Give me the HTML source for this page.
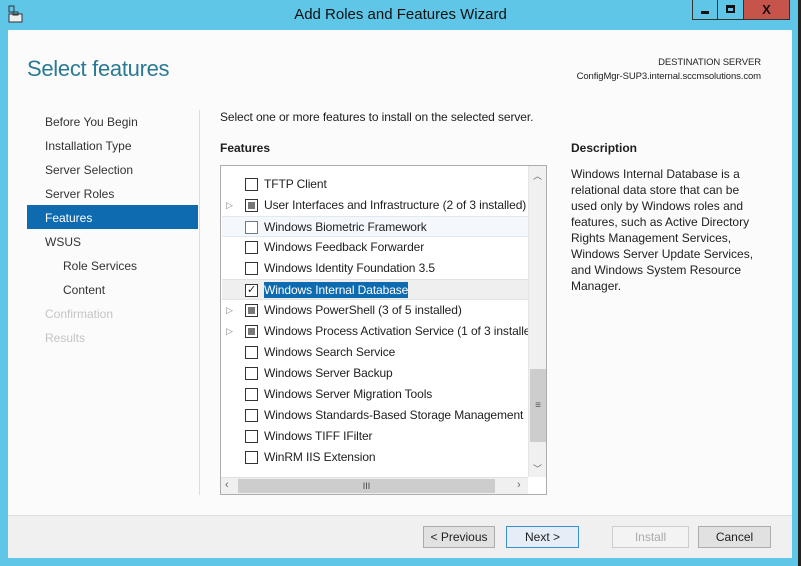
<!DOCTYPE html>
<html><head><style>
*{margin:0;padding:0;box-sizing:border-box}
body{width:801px;height:566px;background:#5fc6e8;font-family:"Liberation Sans",sans-serif;position:relative;overflow:hidden;color:#1e1e1e}
.abs{position:absolute}
.title{left:0;top:0;width:801px;height:30px;text-align:center;font-size:15px;line-height:30px;color:#111}
.win{left:8px;top:30px;width:784px;height:528px;background:#fbfbfb}
.foot{left:8px;top:515px;width:784px;height:43px;background:#f0f0f0;border-top:1px solid #dcdcdc}
.nav{left:45px;font-size:12px;color:#333}
.btn{top:526px;height:22px;border:1px solid #adadad;background:#e1e1e1;font-size:12px;text-align:center;line-height:20px}
.row{position:absolute;left:1px;width:307px;height:21px;font-size:12px;line-height:21px;letter-spacing:-0.1px}
.cb{position:absolute;left:23px;top:4px;width:13px;height:13px;border:1px solid #333;background:#fff}
.cb.p::after{content:"";position:absolute;left:2px;top:2px;width:7px;height:7px;background:#777}
.row span{position:absolute;left:42px;white-space:nowrap}
.ar{position:absolute;left:4px;top:0;font-size:9px;color:#888}
</style></head><body>
<div class="abs title">Add Roles and Features Wizard</div>
<svg class="abs" style="left:8px;top:5px" width="16" height="18"><rect x="1" y="1" width="5" height="6" fill="none" stroke="#333"/><rect x="1" y="9" width="13" height="8" fill="#eee" stroke="#333"/><rect x="5" y="7" width="5" height="3" fill="none" stroke="#333"/></svg>
<div class="abs" style="left:692px;top:0;width:26px;height:20px;background:#5fc6e8;border:1px solid #333;border-top:none"><div style="position:absolute;left:8px;top:11px;width:8px;height:3px;background:#111"></div></div>
<div class="abs" style="left:718px;top:0;width:26px;height:20px;border:1px solid #333;border-top:none;border-left:none"><div style="position:absolute;left:8px;top:5px;width:9px;height:8px;border:2px solid #111;border-top-width:3px"></div></div>
<div class="abs" style="left:744px;top:0;width:46px;height:20px;background:#c7544b;border:1px solid #333;border-top:none;border-left:none;text-align:center;font-weight:bold;font-size:13px;line-height:20px;color:#111">X</div>
<div class="abs" style="left:798px;top:0;width:3px;height:566px;background:#222"></div>
<div class="abs win"></div>
<div class="abs" style="left:27px;top:56px;font-size:22px;color:#2b7a95;letter-spacing:-0.3px">Select features</div>
<div class="abs" style="right:40px;top:56px;font-size:9.5px;text-align:right;line-height:14px;color:#222;letter-spacing:-0.1px">DESTINATION SERVER<br>ConfigMgr-SUP3.internal.sccmsolutions.com</div>
<div class="abs" style="left:27px;top:205px;width:171px;height:24px;background:#0e6bb0"></div>
<div class="abs nav" style="top:115px">Before You Begin</div>
<div class="abs nav" style="top:139px">Installation Type</div>
<div class="abs nav" style="top:163px">Server Selection</div>
<div class="abs nav" style="top:187px">Server Roles</div>
<div class="abs nav" style="top:211px;color:#fff">Features</div>
<div class="abs nav" style="top:235px">WSUS</div>
<div class="abs nav" style="top:259px;left:63px">Role Services</div>
<div class="abs nav" style="top:283px;left:63px">Content</div>
<div class="abs nav" style="top:307px;color:#c4c4c4">Confirmation</div>
<div class="abs nav" style="top:331px;color:#c4c4c4">Results</div>
<div class="abs" style="left:199px;top:110px;width:1px;height:385px;background:#ddd"></div>
<div class="abs" style="left:220px;top:110px;font-size:12px;letter-spacing:-0.1px">Select one or more features to install on the selected server.</div>
<div class="abs" style="left:220px;top:141px;font-size:12px;font-weight:bold">Features</div>
<div class="abs" style="left:571px;top:141px;font-size:12px;font-weight:bold">Description</div>
<div class="abs" style="left:571px;top:166px;width:185px;font-size:12px;line-height:16px">Windows Internal Database is a relational data store that can be used only by Windows roles and features, such as Active Directory Rights Management Services, Windows Server Update Services, and Windows System Resource Manager.</div>
<div class="abs" style="left:220px;top:165px;width:327px;height:330px;border:1px solid #adadad;background:#fff;overflow:hidden">
 <div class="row" style="top:8px"><div class="cb"></div><span>TFTP Client</span></div>
 <div class="row" style="top:29px"><div class="ar">▷</div><div class="cb p"></div><span>User Interfaces and Infrastructure (2 of 3 installed)</span></div>
 <div class="row" style="top:50px;background:#f4f8fc;border-top:1px solid #e0e8f0;border-bottom:1px solid #e0e8f0"><div class="cb" style="border-color:#6a7a8a"></div><span>Windows Biometric Framework</span></div>
 <div class="row" style="top:71px"><div class="cb"></div><span>Windows Feedback Forwarder</span></div>
 <div class="row" style="top:92px"><div class="cb"></div><span>Windows Identity Foundation 3.5</span></div>
 <div class="row" style="top:113px;background:#efefef;border-top:1px solid #e2e2e2;border-bottom:1px solid #e2e2e2"><div class="cb" style="font-size:11px;line-height:11px;text-align:center">✓</div><span style="background:#0e6bb0;color:#fff;line-height:16px;top:2px">Windows Internal Database</span></div>
 <div class="row" style="top:134px"><div class="ar">▷</div><div class="cb p"></div><span>Windows PowerShell (3 of 5 installed)</span></div>
 <div class="row" style="top:155px"><div class="ar">▷</div><div class="cb p"></div><span>Windows Process Activation Service (1 of 3 installed)</span></div>
 <div class="row" style="top:176px"><div class="cb"></div><span>Windows Search Service</span></div>
 <div class="row" style="top:197px"><div class="cb"></div><span>Windows Server Backup</span></div>
 <div class="row" style="top:218px"><div class="cb"></div><span>Windows Server Migration Tools</span></div>
 <div class="row" style="top:239px"><div class="cb"></div><span>Windows Standards-Based Storage Management</span></div>
 <div class="row" style="top:260px"><div class="cb"></div><span>Windows TIFF IFilter</span></div>
 <div class="row" style="top:281px"><div class="cb"></div><span>WinRM IIS Extension</span></div>
 <div style="position:absolute;left:307px;top:0;width:18px;height:311px;background:#f0f0f0;border-left:1px solid #e5e5e5">
  <div style="text-align:center;font-size:9px;color:#666;margin-top:3px">︿</div>
  <div style="position:absolute;left:1px;top:203px;width:16px;height:73px;background:#cdcdcd;text-align:center;line-height:73px;font-size:10px;color:#555">≡</div>
  <div style="position:absolute;bottom:2px;width:17px;text-align:center;font-size:9px;color:#666">﹀</div>
 </div>
 <div style="position:absolute;left:0;top:311px;width:307px;height:17px;background:#f0f0f0;border-top:1px solid #e0e0e0">
  <div style="position:absolute;left:4px;top:1px;font-size:11px;color:#666">‹</div>
  <div style="position:absolute;left:17px;top:1px;width:257px;height:14px;background:#cdcdcd;text-align:center;font-size:9px;line-height:14px;color:#444">III</div>
  <div style="position:absolute;left:296px;top:1px;font-size:11px;color:#666">›</div>
 </div>
</div>
<div class="abs foot"></div>
<div class="abs btn" style="left:423px;width:72px">&lt; Previous</div>
<div class="abs btn" style="left:506px;width:73px;border-color:#3c8fd1;background:#e5eef7">Next &gt;</div>
<div class="abs btn" style="left:612px;width:77px;color:#aaa;background:#f3f3f3;border-color:#ccc">Install</div>
<div class="abs btn" style="left:698px;width:73px">Cancel</div>
</body></html>
